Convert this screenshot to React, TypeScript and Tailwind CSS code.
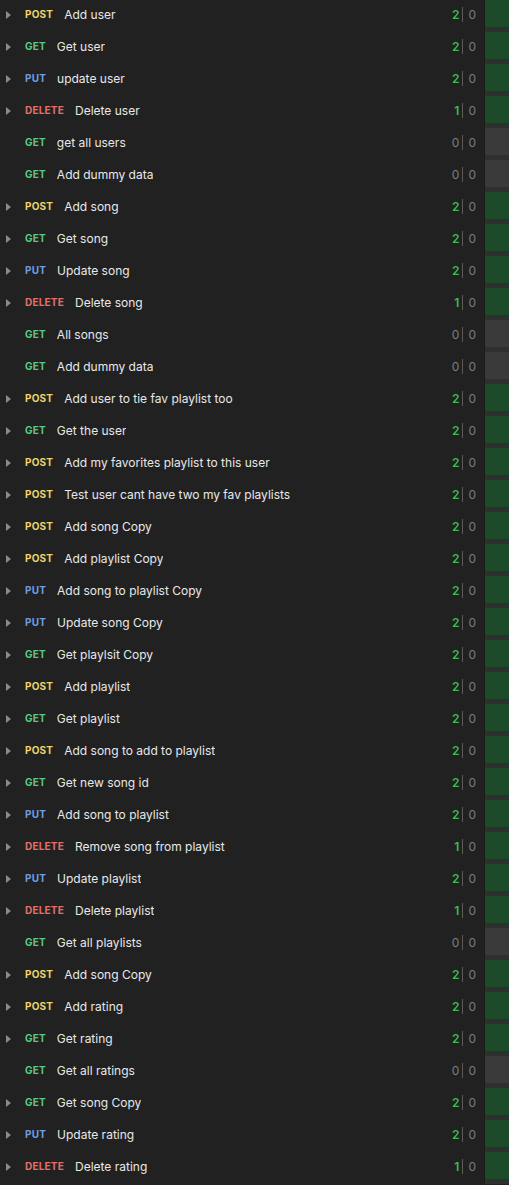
import React from 'react';

type Method = 'GET' | 'POST' | 'PUT' | 'DELETE';

const rows: [Method, string, number][] = [
  ['POST', 'Add user', 2],
  ['GET', 'Get user', 2],
  ['PUT', 'update user', 2],
  ['DELETE', 'Delete user', 1],
  ['GET', 'get all users', 0],
  ['GET', 'Add dummy data', 0],
  ['POST', 'Add song', 2],
  ['GET', 'Get song', 2],
  ['PUT', 'Update song', 2],
  ['DELETE', 'Delete song', 1],
  ['GET', 'All songs', 0],
  ['GET', 'Add dummy data', 0],
  ['POST', 'Add user to tie fav playlist too', 2],
  ['GET', 'Get the user', 2],
  ['POST', 'Add my favorites playlist to this user', 2],
  ['POST', 'Test user cant have two my fav playlists', 2],
  ['POST', 'Add song Copy', 2],
  ['POST', 'Add playlist Copy', 2],
  ['PUT', 'Add song to playlist Copy', 2],
  ['PUT', 'Update song Copy', 2],
  ['GET', 'Get playlsit Copy', 2],
  ['POST', 'Add playlist', 2],
  ['GET', 'Get playlist', 2],
  ['POST', 'Add song to add to playlist', 2],
  ['GET', 'Get new song id', 2],
  ['PUT', 'Add song to playlist', 2],
  ['DELETE', 'Remove song from playlist', 1],
  ['PUT', 'Update playlist', 2],
  ['DELETE', 'Delete playlist', 1],
  ['GET', 'Get all playlists', 0],
  ['POST', 'Add song Copy', 2],
  ['POST', 'Add rating', 2],
  ['GET', 'Get rating', 2],
  ['GET', 'Get all ratings', 0],
  ['GET', 'Get song Copy', 2],
  ['PUT', 'Update rating', 2],
  ['DELETE', 'Delete rating', 1],
];

const methodColor: Record<Method, string> = {
  GET: 'text-[#5dc983]',
  POST: 'text-[#ecd46f]',
  PUT: 'text-[#6d9fe4]',
  DELETE: 'text-[#e46f6c]',
};

const Row: React.FC<{ method: Method; name: string; passed: number }> = ({ method, name, passed }) => {
  const hasTests = passed > 0;
  return (
    <div className="flex h-[32px]">
      <div className="flex-1 flex items-center h-[29px] min-w-0">
        <div className="w-[25px] flex items-center pl-[6px]">
          {hasTests && (
            <svg width="5" height="8" viewBox="0 0 5 8">
              <path d="M0 0 L5 4 L0 8 Z" fill="#8a8a8a" />
            </svg>
          )}
        </div>
        <span className={`text-[10px] font-bold tracking-[0.2px] ${methodColor[method]}`}>{method}</span>
        <span className="ml-[11px] text-[12px] text-[#e8e8e8] truncate">{name}</span>
        <div className="ml-auto mr-[8px] flex items-center text-[12px]">
          <span className={hasTests ? 'font-semibold text-[#3fb852]' : 'text-[#7d7d7d]'}>{passed}</span>
          <span className="ml-[3px] mr-[5px] h-[15px] w-px bg-[#5a5a5a]" />
          <span className="text-[#7d7d7d]">0</span>
        </div>
      </div>
      <div className="w-[25px] border-l border-[#1b1b1b] bg-[#2f2f2f]">
        <div className={`h-[27px] ${hasTests ? 'bg-[#1d4b2a]' : 'bg-[#3a3a3a]'}`} />
      </div>
    </div>
  );
};

export default function App() {
  return (
    <div className="w-[509px] min-h-[1185px] bg-[#212121] font-['Inter','Liberation_Sans',sans-serif]">
      {rows.map(([m, n, p], i) => (
        <Row key={i} method={m} name={n} passed={p} />
      ))}
    </div>
  );
}
